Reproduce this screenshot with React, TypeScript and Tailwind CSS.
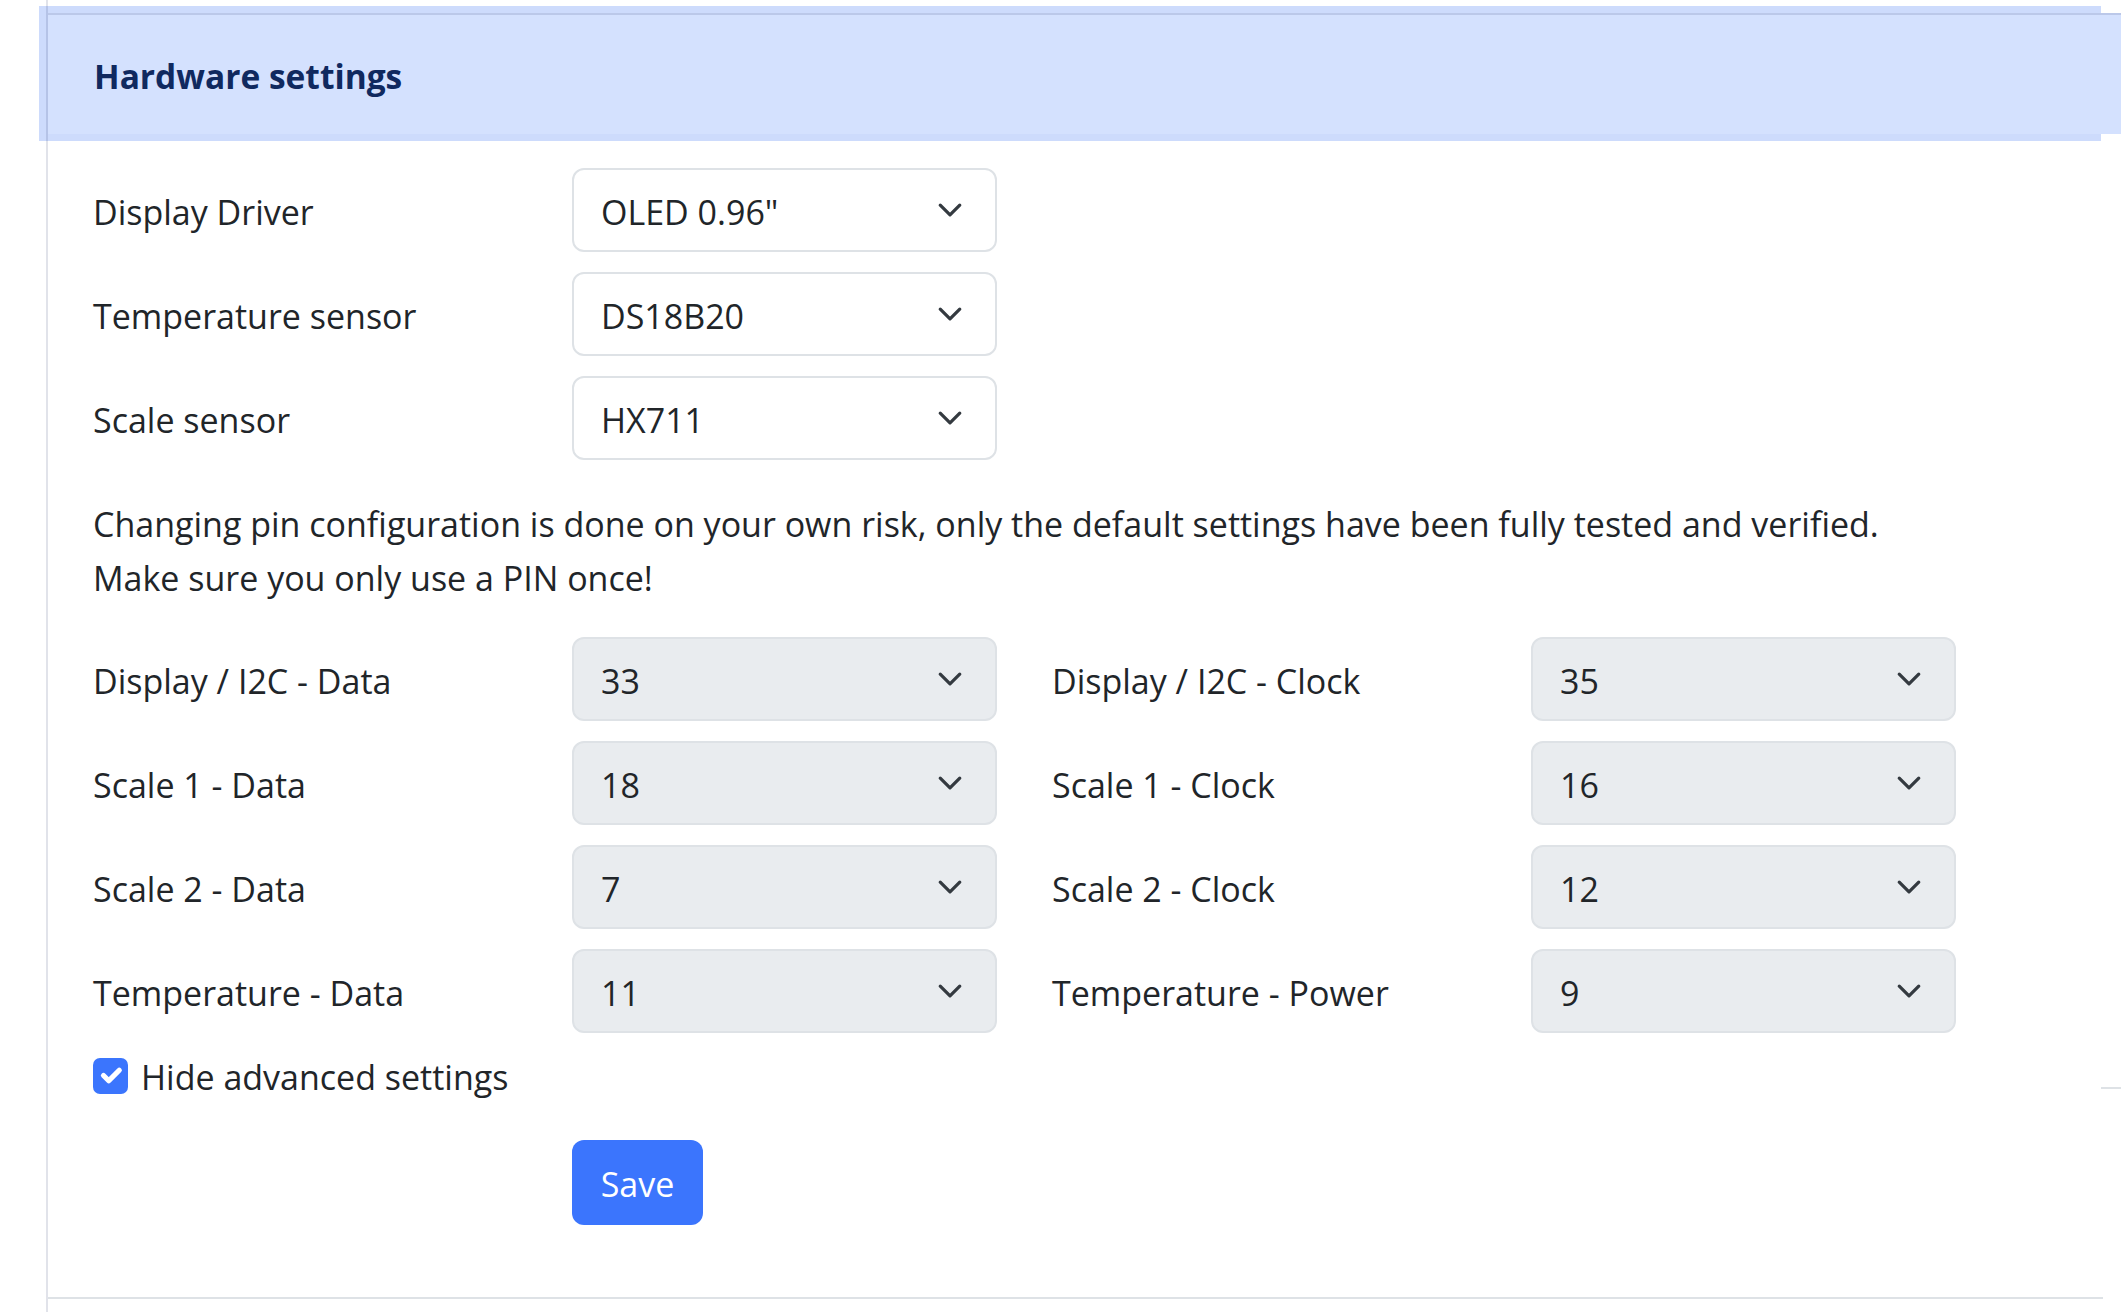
import React from "react";

function Chevron() {
  return (
    <svg width="26" height="26" viewBox="0 0 16 16" fill="none" className="shrink-0">
      <path d="m2 5 6 6 6-6" stroke="#343a40" strokeWidth="2" strokeLinecap="round" strokeLinejoin="round" />
    </svg>
  );
}

function Select({ value, disabled }: { value: string; disabled?: boolean }) {
  return (
    <div
      className={
        "flex h-[84px] w-[425px] items-center justify-between rounded-[12px] border-2 border-[#dee2e6] pl-[27px] pr-[32px] " +
        (disabled ? "bg-[#e9ecef]" : "bg-white")
      }
    >
      <span className="pt-[4px] leading-none">{value}</span>
      <Chevron />
    </div>
  );
}

function Row({ label, value, disabled }: { label: string; value: string; disabled?: boolean }) {
  return (
    <div className="flex items-center">
      <div className="w-[479px] shrink-0 pt-[4px]">{label}</div>
      <Select value={value} disabled={disabled} />
    </div>
  );
}

function PinRow({ l1, v1, l2, v2 }: { l1: string; v1: string; l2: string; v2: string }) {
  return (
    <div className="flex items-center">
      <div className="w-[479px] shrink-0 pt-[4px]">{l1}</div>
      <Select value={v1} disabled />
      <div className="ml-[55px] w-[479px] shrink-0 pt-[4px]">{l2}</div>
      <Select value={v2} disabled />
    </div>
  );
}

export default function App() {
  return (
    <div className="relative min-h-[1312px] w-full overflow-hidden bg-white font-['Open_Sans',sans-serif] text-[34px] text-[#212529]">
      {/* highlight overlay behind header */}
      <div className="absolute left-[39px] top-[6px] h-[135px] w-[2062px] bg-[#cddbfc]" />
      {/* stray border at right edge */}
      <div className="absolute left-[2101px] top-[1087px] h-[2px] w-[20px] bg-[#dee2e6]" />

      <div className="relative ml-[46px] min-h-[1312px] border-l-2 border-[rgba(20,40,90,0.13)] pt-[13px]">
        <div className="flex h-[121px] items-center border-t-2 border-[rgba(20,40,90,0.13)] bg-[#d4e1fe] pl-[46px]">
          <h2 className="pt-[3px] text-[33.5px] font-bold text-[#10295f]">Hardware settings</h2>
        </div>

        <div className="w-[2055px] border-b-2 border-[#dee2e6] pb-[72px] pl-[45px] pt-[34px]">
          <div className="flex flex-col gap-[20px]">
            <Row label="Display Driver" value={'OLED 0.96"'} />
            <Row label="Temperature sensor" value="DS18B20" />
            <Row label="Scale sensor" value="HX711" />
          </div>

          <div className="mt-[37px] leading-[54px]">
            <p>Changing pin configuration is done on your own risk, only the default settings have been fully tested and verified.</p>
            <p>Make sure you only use a PIN once!</p>
          </div>

          <div className="mt-[32px] flex flex-col gap-[20px]">
            <PinRow l1="Display / I2C - Data" v1="33" l2="Display / I2C - Clock" v2="35" />
            <PinRow l1="Scale 1 - Data" v1="18" l2="Scale 1 - Clock" v2="16" />
            <PinRow l1="Scale 2 - Data" v1="7" l2="Scale 2 - Clock" v2="12" />
            <PinRow l1="Temperature - Data" v1="11" l2="Temperature - Power" v2="9" />
          </div>

          <label className="mt-[15px] flex items-center gap-[13px]">
            <span className="flex h-[36px] w-[35px] items-center justify-center rounded-[7px] bg-[#3b75fd]">
              <svg width="35" height="35" viewBox="0 0 20 20" fill="none">
                <path d="m6 10 3 3 6-6" stroke="#fff" strokeWidth="3" strokeLinecap="round" strokeLinejoin="round" />
              </svg>
            </span>
            <span className="pt-[4px]">Hide advanced settings</span>
          </label>

          <div className="mt-[37px] pl-[479px]">
            <button className="flex h-[85px] w-[131px] items-center justify-center rounded-[12px] bg-[#3b75fd] pt-[4px] text-white">
              Save
            </button>
          </div>
        </div>
      </div>
    </div>
  );
}
